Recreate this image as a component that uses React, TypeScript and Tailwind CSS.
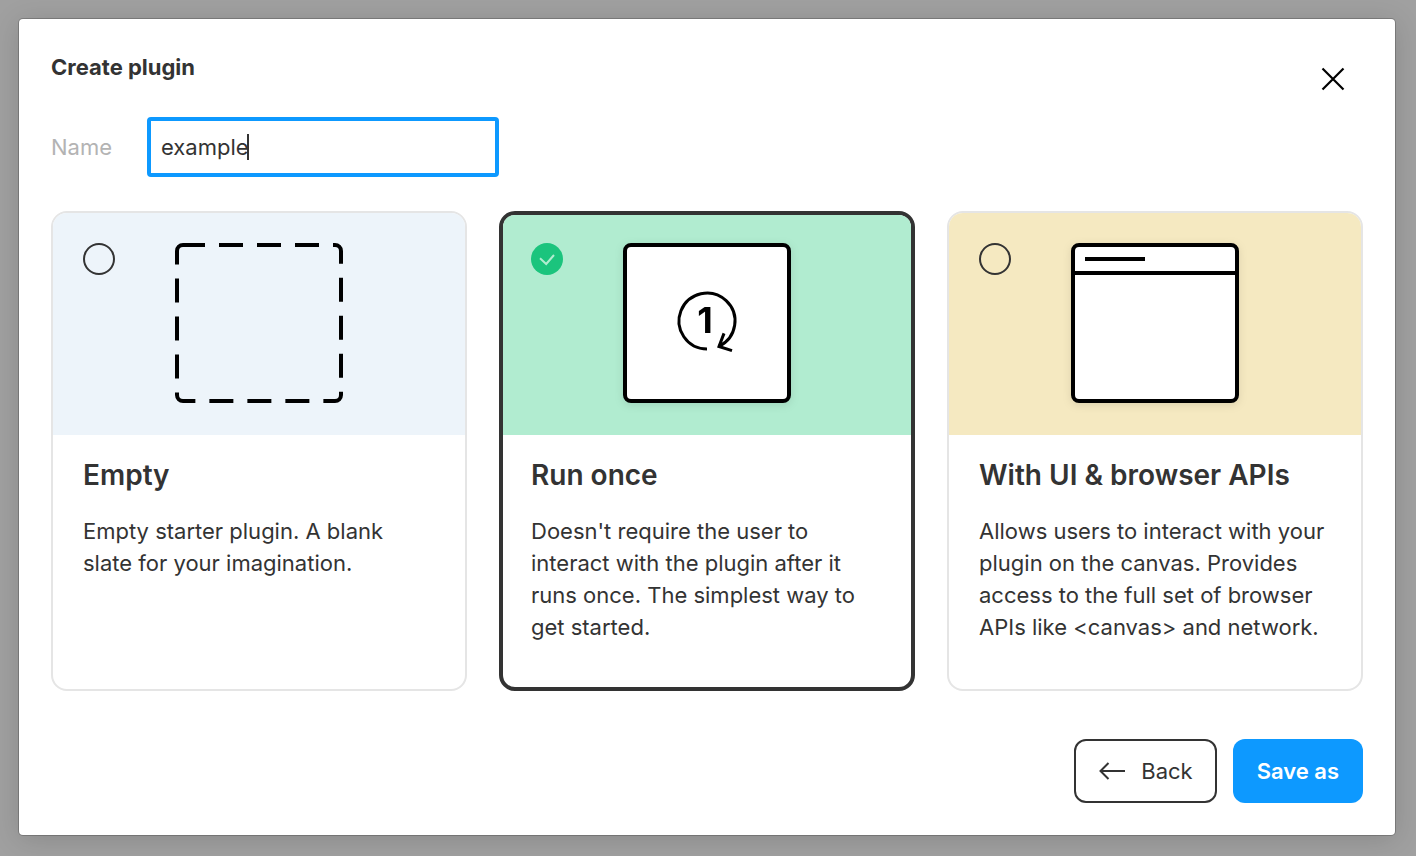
import { useState, type ReactNode } from "react";

type Template = {
  id: string;
  title: string;
  description: string;
  tint: string;
  art: ReactNode;
};

function EmptyArt() {
  return (
    <svg width="168" height="160" viewBox="0 0 168 160" fill="none" aria-hidden="true">
      <rect
        x="2"
        y="2"
        width="164"
        height="156"
        rx="6"
        stroke="#000"
        strokeWidth="4"
        strokeDasharray="24 14"
        strokeDashoffset="2"
      />
    </svg>
  );
}

function RunOnceArt() {
  return (
    <svg
      width="168"
      height="160"
      viewBox="0 0 168 160"
      fill="none"
      aria-hidden="true"
      className="overflow-visible drop-shadow-[0_2px_4px_rgba(0,0,0,0.1)]"
    >
      <rect x="2" y="2" width="164" height="156" rx="6" fill="#fff" stroke="#000" strokeWidth="4" />
      <path d="M84 106A28 28 0 1 1 96 103.3" stroke="#000" strokeWidth="3" />
      <path d="M101 90.4L96 103.5L109 107.6" stroke="#000" strokeWidth="3" />
      <text
        x="82"
        y="90"
        textAnchor="middle"
        fill="#000"
        className="font-['Inter',sans-serif] text-[36px] font-bold"
      >
        1
      </text>
    </svg>
  );
}

function BrowserArt() {
  return (
    <svg
      width="168"
      height="160"
      viewBox="0 0 168 160"
      fill="none"
      aria-hidden="true"
      className="overflow-visible drop-shadow-[0_2px_4px_rgba(0,0,0,0.1)]"
    >
      <rect x="2" y="2" width="164" height="156" rx="6" fill="#fff" stroke="#000" strokeWidth="4" />
      <path d="M2 30H166M14 16H74" stroke="#000" strokeWidth="4" />
    </svg>
  );
}

const templates: Template[] = [
  {
    id: "empty",
    title: "Empty",
    description: "Empty starter plugin. A blank slate for your imagination.",
    tint: "bg-[#edf4fa]",
    art: <EmptyArt />,
  },
  {
    id: "run-once",
    title: "Run once",
    description:
      "Doesn't require the user to interact with the plugin after it runs once. The simplest way to get started.",
    tint: "bg-[#b1ecd0]",
    art: <RunOnceArt />,
  },
  {
    id: "with-ui",
    title: "With UI & browser APIs",
    description:
      "Allows users to interact with your plugin on the canvas. Provides access to the full set of browser APIs like <canvas> and network.",
    tint: "bg-[#f5e9c1]",
    art: <BrowserArt />,
  },
];

function TemplateCard({
  template,
  selected,
  onSelect,
}: {
  template: Template;
  selected: boolean;
  onSelect: () => void;
}) {
  return (
    <label
      className={
        selected
          ? "flex min-h-[480px] cursor-pointer flex-col overflow-hidden rounded-2xl border-4 border-[#333]"
          : "flex min-h-[480px] cursor-pointer flex-col overflow-hidden rounded-2xl border-2 border-[#e5e5e5]"
      }
    >
      <span
        className={`grid grid-cols-[1fr_auto_1fr] ${template.tint} ${
          selected ? "px-7 pt-7 pb-8" : "px-[30px] pt-[30px] pb-8"
        }`}
      >
        <span className="relative size-8">
          <input
            type="radio"
            name="template"
            value={template.id}
            checked={selected}
            onChange={onSelect}
            className="block size-8 appearance-none rounded-full border-2 border-[#333] checked:border-0 checked:bg-[#1bc47d]"
          />
          {selected && (
            <svg
              width="32"
              height="32"
              viewBox="0 0 32 32"
              fill="none"
              aria-hidden="true"
              className="pointer-events-none absolute inset-0"
            >
              <path d="M9 15.3L15.2 21L23 12" stroke="#b1ecd0" strokeWidth="2" />
            </svg>
          )}
        </span>
        {template.art}
      </span>
      <span className={selected ? "flex flex-col gap-5 px-7 pt-5 pb-7" : "flex flex-col gap-5 px-[30px] pt-5 pb-7"}>
        <span className="text-[28px] leading-10 font-semibold">{template.title}</span>
        <span className="leading-8">{template.description}</span>
      </span>
    </label>
  );
}

export default function App() {
  const [name, setName] = useState("example");
  const [choice, setChoice] = useState("run-once");

  return (
    <div className="min-h-screen bg-[#a0a0a0] pt-[19px] pr-[21px] pb-[21px] pl-[19px] font-['Inter',sans-serif] text-[22px] text-[#333]">
      <form
        role="dialog"
        aria-labelledby="dialog-title"
        onSubmit={(event) => event.preventDefault()}
        className="rounded-[4px] bg-white p-8 shadow-[0_0_0_1px_rgba(0,0,0,0.2),0_4px_28px_rgba(0,0,0,0.15)]"
      >
        <header className="flex items-start justify-between">
          <h1 id="dialog-title" className="leading-8 font-bold">
            Create plugin
          </h1>
          <button type="button" aria-label="Close" className="flex h-14 w-[60px] items-center justify-center">
            <svg width="24" height="24" viewBox="0 0 24 24" fill="none" aria-hidden="true">
              <path d="M1.5 1.5L22.5 22.5M22.5 1.5L1.5 22.5" stroke="#000" strokeWidth="2.2" />
            </svg>
          </button>
        </header>

        <div className="mt-[10px] flex items-center">
          <label htmlFor="plugin-name" className="w-24 text-[#b3b3b3]">
            Name
          </label>
          <div className="relative w-[352px]">
            <input
              id="plugin-name"
              type="text"
              value={name}
              onChange={(event) => setName(event.target.value)}
              className="h-[60px] w-full rounded-[4px] border-4 border-[#0d99ff] px-[10px] caret-transparent outline-none"
            />
            <span
              aria-hidden="true"
              className="pointer-events-none absolute top-[17px] left-[100px] h-[26px] w-[2px] bg-[#333]"
            />
          </div>
        </div>

        <div role="radiogroup" aria-label="Template" className="mt-[34px] grid grid-cols-3 gap-8">
          {templates.map((template) => (
            <TemplateCard
              key={template.id}
              template={template}
              selected={template.id === choice}
              onSelect={() => setChoice(template.id)}
            />
          ))}
        </div>

        <footer className="mt-12 flex justify-end gap-4">
          <button
            type="button"
            className="flex h-16 items-center gap-4 rounded-xl border-2 border-[#333] px-[22px]"
          >
            <svg width="27" height="20" viewBox="0 0 27 20" fill="none" aria-hidden="true">
              <path d="M27 10H2.5M10.5 2L2.5 10L10.5 18" stroke="#333" strokeWidth="2" />
            </svg>
            Back
          </button>
          <button type="submit" className="h-16 rounded-xl bg-[#0d99ff] px-6 font-semibold text-white">
            Save as
          </button>
        </footer>
      </form>
    </div>
  );
}
